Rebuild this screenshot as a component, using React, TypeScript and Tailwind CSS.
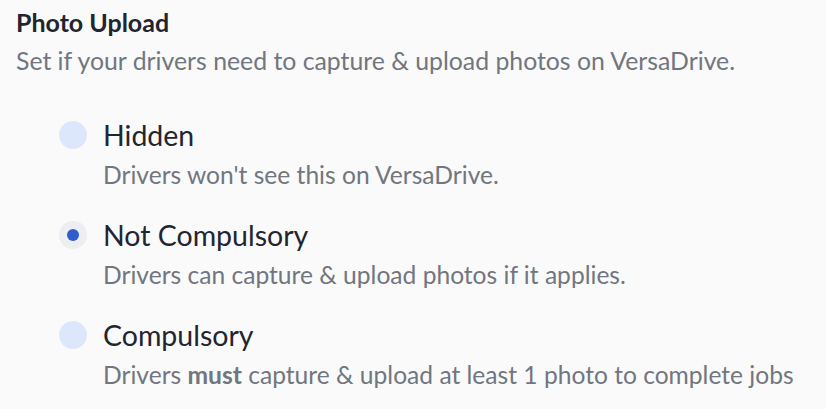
import React, { useState } from 'react';

const options = [
  { id: 'hidden', label: 'Hidden', desc: <>Drivers won't see this on VersaDrive.</> },
  { id: 'optional', label: 'Not Compulsory', desc: <>Drivers can capture &amp; upload photos if it applies.</> },
  {
    id: 'required',
    label: 'Compulsory',
    desc: (
      <>
        Drivers <span className="font-bold">must</span> capture &amp; upload at least 1 photo to complete jobs
      </>
    ),
  },
];

export default function App() {
  const [value, setValue] = useState('optional');

  return (
    <div className="min-h-screen bg-[#fafafa] px-4 pt-[7px]" style={{ fontFamily: 'Lato, "Noto Sans", sans-serif' }}>
      <h2 className="text-[25px] font-bold leading-[30px] text-[#222530]">Photo Upload</h2>
      <p className="mt-[7px] text-[24.8px] leading-[34px] text-[#71767f]">
        Set if your drivers need to capture &amp; upload photos on VersaDrive.
      </p>

      <div className="mt-[37px] flex flex-col gap-[20px] pl-[43px]">
        {options.map((o) => {
          const selected = value === o.id;
          return (
            <label key={o.id} className="flex cursor-pointer items-start gap-4" onClick={() => setValue(o.id)}>
              <span
                className={
                  selected
                    ? 'mt-[6px] flex h-[28px] w-[28px] shrink-0 items-center justify-center rounded-full bg-[#eceef2]'
                    : 'mt-[6px] flex h-[28px] w-[28px] shrink-0 items-center justify-center rounded-full bg-[#dde7fc]'
                }
              >
                {selected && <span className="h-[12px] w-[12px] rounded-full bg-[#2f5dc9]" />}
              </span>
              <div>
                <div className="text-[28.5px] leading-[40px] text-[#222530]">{o.label}</div>
                <div className="text-[24.6px] leading-[40px] text-[#71767f]">{o.desc}</div>
              </div>
            </label>
          );
        })}
      </div>
    </div>
  );
}
